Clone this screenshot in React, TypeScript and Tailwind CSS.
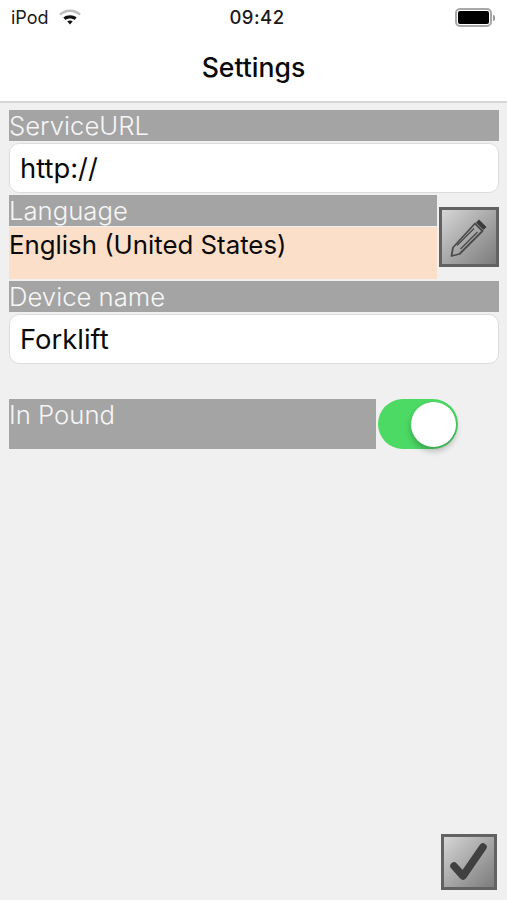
const font = { fontFamily: '"Inter", "Liberation Sans", sans-serif' };

function Label({ children, className = "" }: { children: React.ReactNode; className?: string }) {
  return (
    <div className={`h-[31px] bg-[#a4a4a4] text-[25.7px] leading-[31px] text-[#f6f6f6] font-light ${className}`}>
      {children}
    </div>
  );
}

function Field({ value }: { value: string }) {
  return (
    <div className="h-[50px] rounded-[10px] border border-[#dcdcdc] bg-white pl-[10px] text-[27.4px] leading-[48px] text-[#0a0a0a]">
      {value}
    </div>
  );
}

function Bevel({ size, children }: { size: string; children: React.ReactNode }) {
  return (
    <div
      className={`${size} flex shrink-0 items-center justify-center border-[3px] border-[#626262] bg-gradient-to-br from-[#d6d6d6] via-[#a8a8a8] to-[#7c7c7c]`}
    >
      {children}
    </div>
  );
}

export default function App() {
  return (
    <div className="flex h-[900px] w-[507px] flex-col overflow-hidden bg-[#f0f0f0]" style={font}>
      <header className="h-[103px] shrink-0 border-b-[2px] border-[#d6d6d6] bg-white">
        <div className="flex h-[35px] items-center justify-between pl-[11px] pr-[10px]">
          <div className="flex w-[153px] items-center gap-[10px]">
            <span className="text-[18px] text-[#1a1a1a]">iPod</span>
            <svg width="22" height="17" viewBox="0 0 23 17" className="-mt-[1px]">
              <path d="M1 5.5C7 0 16 0 22 5.5" fill="none" stroke="#bcbcbc" strokeWidth="2.6" />
              <path d="M4.5 8.6C8.5 5.3 14.5 5.3 18.5 8.6L16.2 11C13.5 8.9 9.5 8.9 6.8 11Z" fill="#111" />
              <path d="M8.6 12.5C10.4 11.4 12.6 11.4 14.4 12.5L11.5 15.8Z" fill="#111" />
            </svg>
          </div>
          <span className="text-[18.5px] font-medium tracking-[0.5px] text-[#1a1a1a]">09:42</span>
          <div className="flex w-[147px] items-center justify-end">
            <div className="flex h-[19px] w-[37px] items-center justify-center rounded-[5px] border-[2px] border-[#a8a8a8] bg-white">
              <div className="h-[13px] w-[31px] rounded-[2px] bg-black" />
            </div>
            <div className="ml-[1px] mr-[2px] h-[6px] w-[2px] rounded-r-[2px] bg-[#9a9a9a]" />
          </div>
        </div>
        <div className="pt-[14px] text-center text-[26.6px] font-medium leading-[36px] text-[#0a0a0a]">Settings</div>
      </header>

      <main className="flex flex-1 flex-col pl-[9px] pr-[8px] pt-[7px]">
        <Label>ServiceURL</Label>
        <div className="mt-[2px]">
          <Field value="http://" />
        </div>

        <div className="mt-[2px] flex items-center gap-[2px]">
          <div className="flex-1">
            <Label>Language</Label>
            <div className="mt-[1px] h-[52px] bg-[#fcdfc8] text-[25.8px] leading-[35px] text-[#0a0a0a]">English (United States)</div>
          </div>
          <Bevel size="h-[60px] w-[60px]">
            <svg width="42" height="42" viewBox="0 0 42 42" fill="none">
              <path d="M31 3.5l7.5 7.5-3 3-7.5-7.5z" fill="#3c3c3c" />
              <path d="M27 7.5l7.5 7.5L11.5 38l-8 2 1.5-8.500z" stroke="#4a4a4a" strokeWidth="1.8" strokeLinejoin="round" />
              <path d="M26 12.5L9 29.5M29.5 16L12.5 33" stroke="#4a4a4a" strokeWidth="1.3" />
            </svg>
          </Bevel>
        </div>

        <Label className="mt-[2px]">Device name</Label>
        <div className="mt-[2px]">
          <Field value="Forklift" />
        </div>

        <div className="mt-[35px] flex items-start gap-[2px]">
          <div className="h-[50px] w-[367px] bg-[#a4a4a4] text-[25.7px] leading-[32px] font-light text-[#f6f6f6]">In Pound</div>
          <div className="flex h-[50px] w-[80px] items-center justify-end rounded-full bg-[#4cd964] pr-[2px]">
            <div className="h-[45px] w-[45px] rounded-full bg-white shadow-[0_4px_6px_rgba(0,0,0,0.25)]" />
          </div>
        </div>

        <div className="mt-auto mb-[10px] flex justify-end pr-[2px]">
          <Bevel size="h-[56px] w-[56px]">
            <svg width="42" height="42" viewBox="0 0 42 42" fill="none">
              <path d="M6 25l9 10L35 6" stroke="#404040" strokeWidth="7.5" strokeLinecap="round" strokeLinejoin="round" />
            </svg>
          </Bevel>
        </div>
      </main>
    </div>
  );
}
